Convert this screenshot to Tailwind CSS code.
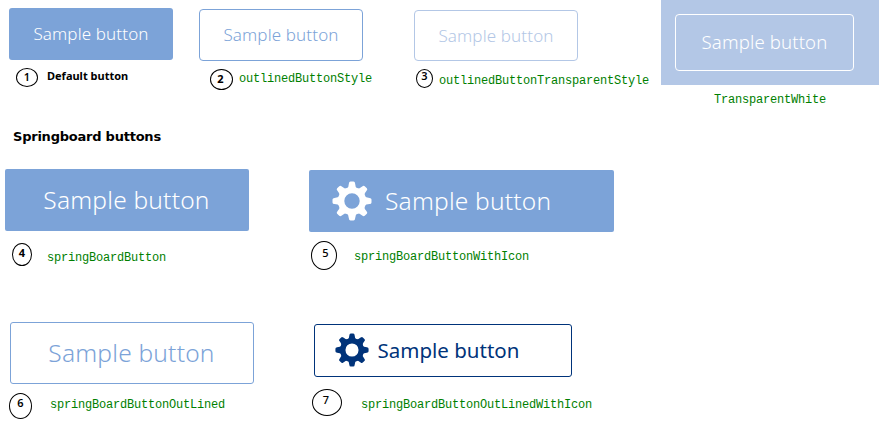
<!DOCTYPE html>
<html lang="en">
<head>
<meta charset="utf-8">
<title>Button styles</title>
<script src="https://cdn.jsdelivr.net/npm/@tailwindcss/browser@4"></script>
</head>
<body class="bg-white w-[889px] h-[441px] overflow-hidden font-['Noto_Sans','Open_Sans',sans-serif] text-black">
<svg class="hidden">
  <symbol id="gear" viewBox="-20 -20 40 40">
    <circle r="10.9" fill="none" stroke="currentColor" stroke-width="6.4"/>
    <g fill="currentColor">
      <path id="tooth" d="M-5 -12 Q-3.3 -14 -3.1 -17.5 Q-3 -19.5 -1.5 -19.5 H1.5 Q3 -19.5 3.1 -17.5 Q3.3 -14 5 -12Z"/>
      <use href="#tooth" transform="rotate(45)"/><use href="#tooth" transform="rotate(90)"/>
      <use href="#tooth" transform="rotate(135)"/><use href="#tooth" transform="rotate(180)"/>
      <use href="#tooth" transform="rotate(225)"/><use href="#tooth" transform="rotate(270)"/>
      <use href="#tooth" transform="rotate(315)"/>
    </g>
  </symbol>
</svg>

<section class="flex items-start h-[128px]">
  <div class="ml-[9px] mt-2 w-[190px]">
    <button class="flex items-center justify-center w-[164px] h-[52px] rounded-[3px] bg-[#7ca3d8] text-white font-[350] text-[17px] tracking-[0.12px] whitespace-nowrap">Sample button</button>
    <div class="flex items-start pt-2 pl-[7px]">
      <span class="flex items-center justify-center w-[22px] h-[19px] rounded-[50%] border border-black text-[11px] font-semibold">1</span>
      <span class="ml-[9px] text-[11px] leading-4 font-bold whitespace-nowrap">Default button</span>
    </div>
  </div>
  <div class="mt-[9px] w-[215px]">
    <button class="flex items-center justify-center w-[164px] h-[52px] rounded-[4px] border border-[#7ca3d8] text-[#7ca3d8] font-[350] text-[17px] tracking-[0.12px] whitespace-nowrap">Sample button</button>
    <div class="flex items-start pt-2 pl-[11px]">
      <span class="flex items-center justify-center w-[23px] h-[21px] pr-[2px] rounded-[50%] border border-black text-[11px] font-bold">2</span>
      <span class="ml-[6px] mt-[2px] font-['Liberation_Mono',monospace] text-[12px] leading-4 tracking-[-0.2px] text-[#008000]">outlinedButtonStyle</span>
    </div>
  </div>
  <div class="mt-[10px] w-[247px]">
    <button class="flex items-center justify-center w-[164px] h-[51px] rounded-[4px] border border-[#b3c7e6] text-[#b3c7e6] font-[350] text-[17px] tracking-[0.12px] whitespace-nowrap">Sample button</button>
    <div class="flex items-start pt-2 pl-[2px]">
      <span class="flex items-center justify-center w-[17px] h-[19px] pb-[4px] rounded-[50%] border border-black text-[11px] font-semibold">3</span>
      <span class="ml-[6px] mt-[4px] font-['Liberation_Mono',monospace] text-[12px] leading-4 tracking-[-0.2px] text-[#008000]">outlinedButtonTransparentStyle</span>
    </div>
  </div>
  <div class="w-[218px]">
    <div class="h-[85px] bg-[#b3c7e6] pt-[14px] pl-[14px]">
      <button class="flex items-center justify-center w-[179px] h-[57px] pb-px rounded-[4px] border-[1.5px] border-white text-white font-[350] text-[18.6px] tracking-[0.12px] whitespace-nowrap">Sample button</button>
    </div>
    <div class="pl-[53px] pt-[7px] font-['Liberation_Mono',monospace] text-[12px] leading-4 tracking-[-0.2px] text-[#008000]">TransparentWhite</div>
  </div>
</section>

<h2 class="h-[41px] pt-px pl-[13px] font-['DejaVu_Sans',sans-serif] font-bold text-[13px] leading-4 tracking-[-0.23px]">Springboard buttons</h2>

<section class="flex items-start h-[153px]">
  <div class="ml-[5px] w-[304px]">
    <button class="flex items-center justify-center w-[244px] h-[62px] pr-[1px] rounded-[2px] bg-[#7ca3d8] text-white font-[350] text-[24.5px] tracking-[0.2px] whitespace-nowrap">Sample button</button>
    <div class="flex items-start pt-3 pl-[7px]">
      <span class="flex items-center justify-center w-[20px] h-[23px] pb-[3px] rounded-[50%] border border-black text-[11px] font-bold">4</span>
      <span class="ml-[15px] mt-[7px] font-['Liberation_Mono',monospace] text-[12px] leading-4 tracking-[-0.2px] text-[#008000]">springBoardButton</span>
    </div>
  </div>
  <div class="mt-[1px] w-[306px]">
    <button class="flex items-center w-[305px] h-[62px] pl-[23px] rounded-[2px] bg-[#7ca3d8] text-white font-[350] text-[24.5px] tracking-[0.2px] whitespace-nowrap"><svg class="w-10 h-10 shrink-0 mr-[13px]"><use href="#gear"/></svg>Sample button</button>
    <div class="flex items-start pt-[9px] pl-[2px]">
      <span class="flex items-center justify-center w-[26px] h-[29px] pb-[4px] pl-[3px] rounded-[50%] border border-black text-[11px] font-medium">5</span>
      <span class="ml-[17px] mt-[8px] font-['Liberation_Mono',monospace] text-[12px] leading-4 tracking-[-0.2px] text-[#008000]">springBoardButtonWithIcon</span>
    </div>
  </div>
</section>

<section class="flex items-start">
  <div class="ml-[9px] w-[305px]">
    <button class="ml-px flex items-center justify-center w-[244px] h-[62px] pr-[1px] rounded-[3px] border border-[#7ca3d8] text-[#7ca3d8] font-[350] text-[24.5px] tracking-[0.2px] whitespace-nowrap">Sample button</button>
    <div class="flex items-start pt-[9px]">
      <span class="flex items-center justify-center w-[23px] h-[26px] pb-[5px] rounded-[50%] border border-black text-[11px] font-semibold">6</span>
      <span class="ml-[18px] mt-[4px] font-['Liberation_Mono',monospace] text-[12px] leading-4 tracking-[-0.2px] text-[#008000]">springBoardButtonOutLined</span>
    </div>
  </div>
  <div class="mt-[2px]">
    <button class="flex items-center w-[258px] h-[53px] pl-[20px] rounded-[3px] border border-[#00337a] text-[#00337a] text-[20.5px] whitespace-nowrap"><svg class="w-[34px] h-[34px] shrink-0 mr-[8.5px] mb-px"><use href="#gear"/></svg>Sample button</button>
    <div class="flex items-start pt-3 -ml-[2px]">
      <span class="flex items-center justify-center w-[30px] h-[27px] pb-[5px] pr-[2px] rounded-[50%] border border-black text-[11px] font-medium">7</span>
      <span class="ml-[19px] mt-[8px] font-['Liberation_Mono',monospace] text-[12px] leading-4 tracking-[-0.2px] text-[#008000]">springBoardButtonOutLinedWithIcon</span>
    </div>
  </div>
</section>
</body>
</html>
